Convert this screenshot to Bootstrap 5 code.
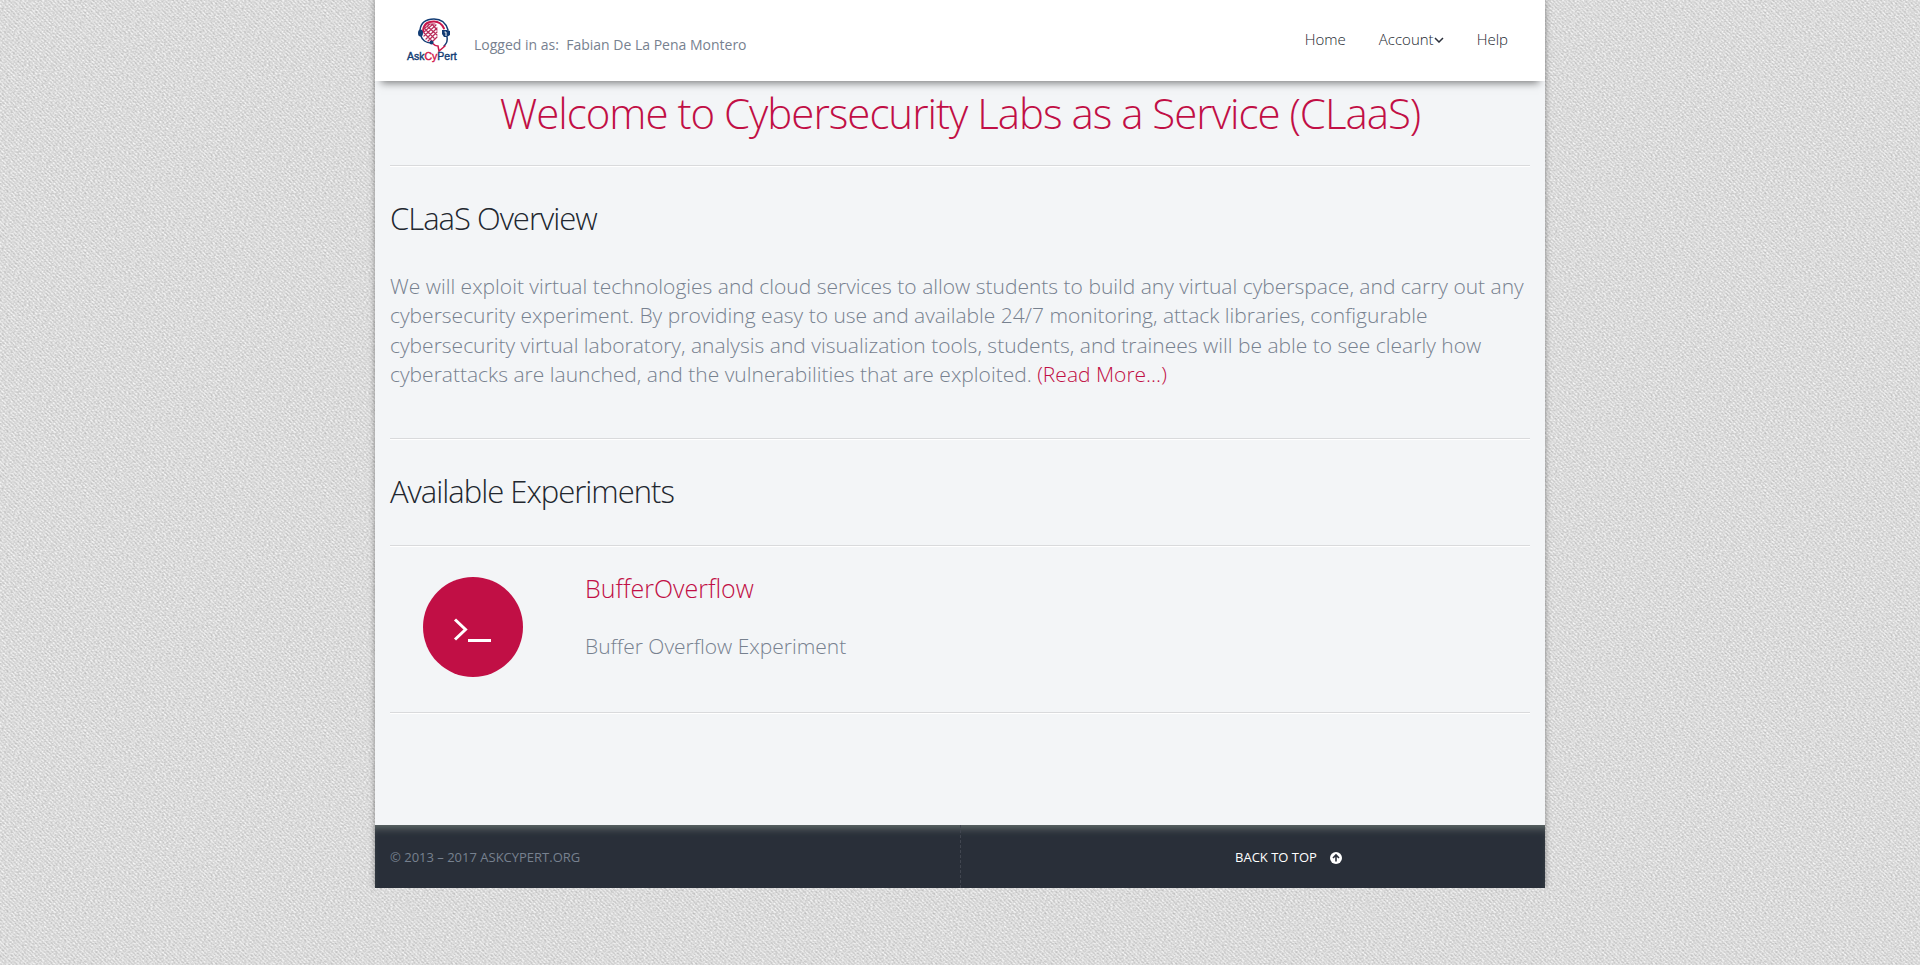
<!DOCTYPE html>
<html lang="en">
<head>
<meta charset="utf-8">
<meta name="viewport" content="width=device-width, initial-scale=1">
<title>Cybersecurity Labs as a Service</title>
<link href="https://cdn.jsdelivr.net/npm/bootstrap@5.3.0/dist/css/bootstrap.min.css" rel="stylesheet">
<style>
  body {
    font-family: "Open Sans", sans-serif;
    font-size: 14px;
    color: #77818f;
    background: #d8d8d8 url("data:image/svg+xml,%3Csvg xmlns='http://www.w3.org/2000/svg' width='240' height='240'%3E%3Cfilter id='n' x='0' y='0' width='100%25' height='100%25'%3E%3CfeTurbulence type='fractalNoise' baseFrequency='.45 .6' numOctaves='2' stitchTiles='stitch'/%3E%3CfeColorMatrix values='.5 0 0 0 .51 .5 0 0 0 .51 .5 0 0 0 .51 0 0 0 0 1'/%3E%3C/filter%3E%3Cpattern id='w' width='4' height='4' patternUnits='userSpaceOnUse'%3E%3Cpath d='M0 0h2v1H0zM1 1h2v1H1zM2 2h2v1H2zM3 3h1v1H3zM0 3h1v1H0z' fill='%23888' fill-opacity='.15'/%3E%3C/pattern%3E%3Crect width='240' height='240' filter='url(%23n)'/%3E%3Crect width='240' height='240' fill='url(%23w)'/%3E%3C/svg%3E");
  }
  a { color: #c10f45; text-decoration: none; }
  a:hover { color: #8e0b33; }
  .page-shell { max-width: 1170px; background: #f3f5f7; box-shadow: 0 0 6px rgba(0,0,0,.4); }
  .topbar { min-height: 81px; background: #fff; box-shadow: 0 8px 8px -6px rgba(0,0,0,.5); padding: 0 23px 2px 31px; }
  .brand-logo { width: 52px; height: 46px; }
  .signed-in { margin-top: 9px; }
  .main-links { gap: 33px; margin-right: 14px; padding-bottom: 2px; }
  .main-links .nav-link { color: #22272f; font-size: 15px; font-weight: 300; line-height: 24px; padding: 0; }
  .chevron { width: 10px; height: 6px; }
  .content-area { padding: 0 15px; min-height: 744px; }
  h1, h2, h3 { font-weight: 300; margin: 0; }
  h1 { font-size: 42px; line-height: 60px; letter-spacing: -1px; color: #c10f45; padding: 2px 0 22px; }
  h2 { font-size: 31px; line-height: 40px; letter-spacing: -1px; color: #22272f; }
  h3 { font-size: 25px; line-height: 32px; }
  .rule { border: 0; border-top: 1px solid #d9dadc; border-bottom: 1px solid #fff; opacity: 1; margin: 0; }
  .lead-copy { font-size: 21px; line-height: 1.4; font-weight: 300; margin: 0; }
  .overview { padding: 31px 0 48px; }
  .overview .lead-copy { margin-top: 34px; }
  .list-heading { padding: 31px 0 34px; }
  .experiment { padding: 25px 0 34px 33px; gap: 62px; min-height: 165px; }
  .experiment .lead-copy { margin-top: 28px; }
  .round-icon { width: 100px; height: 100px; margin-top: 5px; }
  .footer-bar { min-height: 63px; background: #292f39; font-size: 13px; box-shadow: inset 0 8px 8px -5px #66706f; }
  .footer-bar a { color: #fff; gap: 13px; }
  .footer-note { padding: 2px 15px 0; }
  .footer-split { border-left: 1px dashed #414650; padding: 2px 0 0 71px; }
</style>
</head>
<body>
<div class="page-shell mx-auto" id="top">
  <header class="topbar d-flex justify-content-between align-items-center position-relative">
    <div class="d-flex align-items-center gap-3">
      <a href="#top" aria-label="AskCyPert">
        <svg class="brand-logo d-block" viewBox="0 0 52 46" aria-hidden="true">
          <g fill="none" stroke-linecap="round">
            <path d="M14 13C15 5 21 2 28 2s12 4 14 11" stroke="#123c74" stroke-width="1.500"/>
            <path d="M17 15C17 7 22 4.500 28 4.500c5 0 8 2.500 10 7" stroke="#c8174b" stroke-width="1.900"/>
            <path d="M15 19c1 4 5 7 10 7M41 20c1 4-1 7-3 9" stroke="#123c74" stroke-width="1.500"/>
            <path d="M26 26c2 2 4 3 6 3l1 5 6-5" stroke="#c8174b" stroke-width="1.500"/>
            <path d="M22 7h7M19 11l5-4M18 15l9-8M18 19l12-11M20 22l11-11M22 24l9-9M26 25l5-5M18 11l10 10M21 9l10 9M18 16l8 8M26 7l5 6" stroke="#b72b59" stroke-width="1.200"/>
          </g>
          <ellipse cx="14.500" cy="16" rx="2.500" ry="3.500" fill="#123c74"/>
          <path d="M36 13h5l3 1v4l-3 2h-3l-2-3z" fill="#123c74"/>
          <path d="M38.500 15H40v4" stroke="#fff" fill="none"/>
          <circle cx="25.500" cy="25.500" r="2" fill="#123c74"/>
          <text x="1" y="43" font-family="Liberation Sans, sans-serif" font-size="10.500" fill="#123c74" stroke="#123c74" stroke-width=".4">Ask<tspan fill="#d3164b" stroke="#d3164b">Cy</tspan>Pert</text>
        </svg>
      </a>
      <div class="signed-in">Logged in as: &nbsp;Fabian De La Pena Montero</div>
    </div>
    <nav class="nav main-links" aria-label="Main">
      <a class="nav-link" href="#top">Home</a>
      <a class="nav-link" href="#account">Account<svg class="chevron" viewBox="0 0 10 6" aria-hidden="true"><path d="M1 1l4 4 4-4" fill="none" stroke="#2a2f3a" stroke-width="1.500"/></svg></a>
      <a class="nav-link" href="#help">Help</a>
    </nav>
  </header>
  <main class="content-area">
    <h1 class="text-center">Welcome to Cybersecurity Labs as a Service (CLaaS)</h1>
    <hr class="rule">
    <section class="overview">
      <h2>CLaaS Overview</h2>
      <p class="lead-copy">We will exploit virtual technologies and cloud services to allow students to build any virtual cyberspace, and carry out any cybersecurity experiment. By providing easy to use and available 24/7 monitoring, attack libraries, configurable cybersecurity virtual laboratory, analysis and visualization tools, students, and trainees will be able to see clearly how cyberattacks are launched, and the vulnerabilities that are exploited. <a href="#more">(Read More...)</a></p>
    </section>
    <hr class="rule">
    <h2 class="list-heading">Available Experiments</h2>
    <hr class="rule">
    <article class="experiment d-flex align-items-start">
      <a class="flex-shrink-0" href="#buffer" aria-label="Open BufferOverflow">
        <svg class="round-icon d-block" viewBox="0 0 100 100" aria-hidden="true"><circle cx="50" cy="50" r="50" fill="#c10f45"/><path d="M32 42.500L42.500 52.500 32 62.500" fill="none" stroke="#fff" stroke-width="3"/><path d="M45 62h23v3H45z" fill="#fff"/></svg>
      </a>
      <div>
        <h3><a href="#buffer">BufferOverflow</a></h3>
        <p class="lead-copy">Buffer Overflow Experiment</p>
      </div>
    </article>
    <hr class="rule">
  </main>
  <footer class="footer-bar d-flex align-items-stretch">
    <div class="footer-note w-50 d-flex align-items-center">© 2013 – 2017 ASKCYPERT.ORG</div>
    <div class="footer-split w-50 d-flex align-items-center justify-content-center">
      <a class="d-flex align-items-center" href="#top">BACK TO TOP
        <svg width="12" height="12" viewBox="0 0 12 12" aria-hidden="true"><circle cx="6" cy="6" r="6" fill="#fff"/><path d="M6 9.500V3M3 6l3-3 3 3" fill="none" stroke="#2a2f3a" stroke-width="1.600"/></svg>
      </a>
    </div>
  </footer>
</div>
<script src="https://cdn.jsdelivr.net/npm/bootstrap@5.3.0/dist/js/bootstrap.bundle.min.js"></script>
</body>
</html>
